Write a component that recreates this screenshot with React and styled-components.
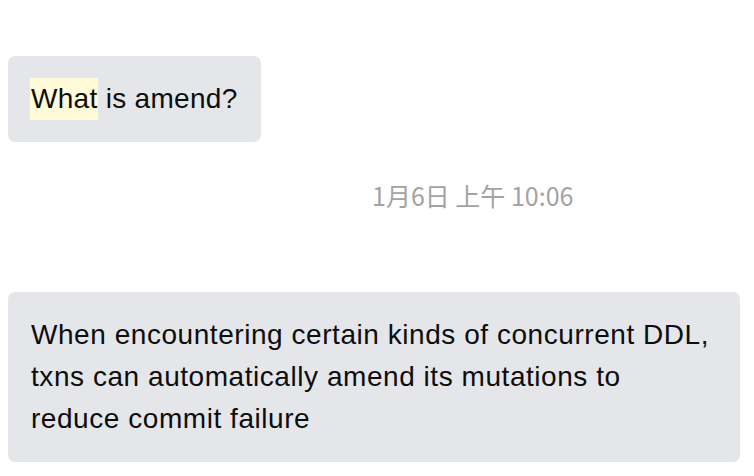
import React from "react";
import styled, { createGlobalStyle } from "styled-components";

const GlobalStyle = createGlobalStyle`
  body {
    margin: 0;
    background: #ffffff;
    font-family: "Liberation Sans", "Noto Sans CJK SC", Arial, sans-serif;
  }
`;

const Thread = styled.main`
  display: flex;
  flex-direction: column;
  align-items: flex-start;
  padding: 56px 14px 14px 8px;
`;

const Bubble = styled.div`
  background-color: #e5e6ea;
  color: #0d0d0d;
  border-radius: 7px;
  padding: 22px 23px;
  font-size: 28px;
  letter-spacing: ${(props) => (props.wide ? "0.55px" : "0.3px")};
  line-height: 42px;
  box-sizing: border-box;
  width: ${(props) => (props.wide ? "100%" : "auto")};
`;

const Highlight = styled.span`
  display: inline-block;
  background-color: #fffbd8;
  line-height: 42px;
  margin-left: -1px;
  padding-left: 1px;
`;

const Stamp = styled.div`
  align-self: stretch;
  margin: 38px 0 82px;
  padding-left: 364px;
  font-size: 25px;
  line-height: 30px;
  color: #a3a3a3;
  font-family: "Noto Sans CJK SC", "Liberation Sans", sans-serif;
`;

export default function App() {
  return (
    <>
      <GlobalStyle />
      <Thread>
        <Bubble>
          <Highlight>What</Highlight> is amend?
        </Bubble>
        <Stamp>1月6日 上午 10:06</Stamp>
        <Bubble wide>
          When encountering certain kinds of concurrent DDL,
          <br />
          txns can automatically amend its mutations to
          <br />
          reduce commit failure
        </Bubble>
      </Thread>
    </>
  );
}
